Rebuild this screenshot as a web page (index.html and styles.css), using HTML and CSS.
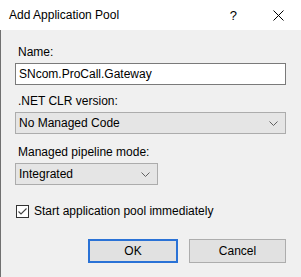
FILE: index.html
```html
<!DOCTYPE html>
<html lang="en">
<head>
    <meta charset="UTF-8">
    <title>Add Application Pool</title>
    <link rel="stylesheet" href="styles.css">
</head>
<body>
    <div class="dialog">
        <div class="title-bar">
            <span class="title-text">Add Application Pool</span>
            <span class="title-help">?</span>
            <svg class="title-close" width="11" height="11" viewBox="0 0 11 11">
                <path d="M0.5 0.5 L10.5 10.5 M10.5 0.5 L0.5 10.5" stroke="#000" stroke-width="1" fill="none"/>
            </svg>
        </div>

        <div class="dialog-body">
            <label class="field-label first">Name:</label>
            <div class="text-input">SNcom.ProCall.Gateway</div>

            <label class="field-label">.NET CLR version:</label>
            <div class="combo wide">
                <span>No Managed Code</span>
                <svg class="chevron" width="9" height="5" viewBox="0 0 9 5">
                    <path d="M0.5 0.5 L4.5 4.5 L8.5 0.5" stroke="#606060" stroke-width="1" fill="none"/>
                </svg>
            </div>

            <label class="field-label third">Managed pipeline mode:</label>
            <div class="combo narrow">
                <span>Integrated</span>
                <svg class="chevron" width="9" height="5" viewBox="0 0 9 5">
                    <path d="M0.5 0.5 L4.5 4.5 L8.5 0.5" stroke="#606060" stroke-width="1" fill="none"/>
                </svg>
            </div>

            <div class="check-row">
                <span class="check-box">
                    <svg width="11" height="11" viewBox="0 0 11 11">
                        <path d="M1.5 5.5 L4 8 L9.5 2.5" stroke="#444" stroke-width="1.1" fill="none"/>
                    </svg>
                </span>
                <span class="check-label">Start application pool immediately</span>
            </div>

            <div class="button-row">
                <button class="dlg-button default">OK</button>
                <button class="dlg-button cancel">Cancel</button>
            </div>
        </div>
    </div>
</body>
</html>
```

FILE: styles.css
```css
body {
    margin: 0;
    padding: 0;
    font-family: 'Liberation Sans', Arial, sans-serif;
    font-size: 12px;
    color: #000;
    background: #f0f0f0;
}
.dialog {
    width: 301px;
    height: 277px;
    display: flex;
    flex-direction: column;
    overflow: hidden;
}
.title-bar {
    height: 30px;
    background: white;
    display: flex;
    align-items: center;
    flex-shrink: 0;
}
.title-text {
    margin-left: 9px;
    font-size: 12px;
    flex: 1;
}
.title-help {
    font-size: 13px;
    margin-right: 36px;
}
.title-close {
    margin-right: 17px;
}
.dialog-body {
    flex: 1;
    border-left: 1px solid #707070;
    padding: 0 15px 0 14px;
    display: flex;
    flex-direction: column;
    align-items: flex-start;
}
.field-label {
    display: block;
    line-height: 15px;
    margin: 9px 0 3px 3px;
}
.field-label.first {
    margin-top: 15px;
}
.field-label.third {
    margin-top: 11px;
}
.text-input {
    box-sizing: border-box;
    width: 271px;
    height: 22px;
    background: white;
    border: 1px solid #7a7a7a;
    padding-left: 3px;
    line-height: 20px;
}
.combo {
    box-sizing: border-box;
    height: 22px;
    background: #e5e5e5;
    border: 1px solid #acacac;
    padding: 0 7px 0 3px;
    display: flex;
    align-items: center;
    justify-content: space-between;
}
.combo.wide {
    width: 271px;
}
.combo.narrow {
    width: 143px;
}
.check-row {
    display: flex;
    align-items: center;
    margin-top: 19px;
    line-height: 15px;
}
.check-box {
    box-sizing: border-box;
    width: 13px;
    height: 13px;
    border: 1px solid #333;
    background: white;
    display: flex;
    align-items: center;
    justify-content: center;
    margin-left: 1px;
}
.check-label {
    margin-left: 5px;
}
.button-row {
    display: flex;
    gap: 11px;
    margin-top: 20px;
    margin-left: 73px;
}
.dlg-button {
    box-sizing: border-box;
    height: 24px;
    background: #e1e1e1;
    border: 1px solid #adadad;
    font-family: 'Liberation Sans', Arial, sans-serif;
    font-size: 12px;
    color: #000;
    padding: 0;
}
.dlg-button.default {
    width: 90px;
    border: 2px solid #2a72d6;
}
.dlg-button.cancel {
    width: 97px;
}
```
